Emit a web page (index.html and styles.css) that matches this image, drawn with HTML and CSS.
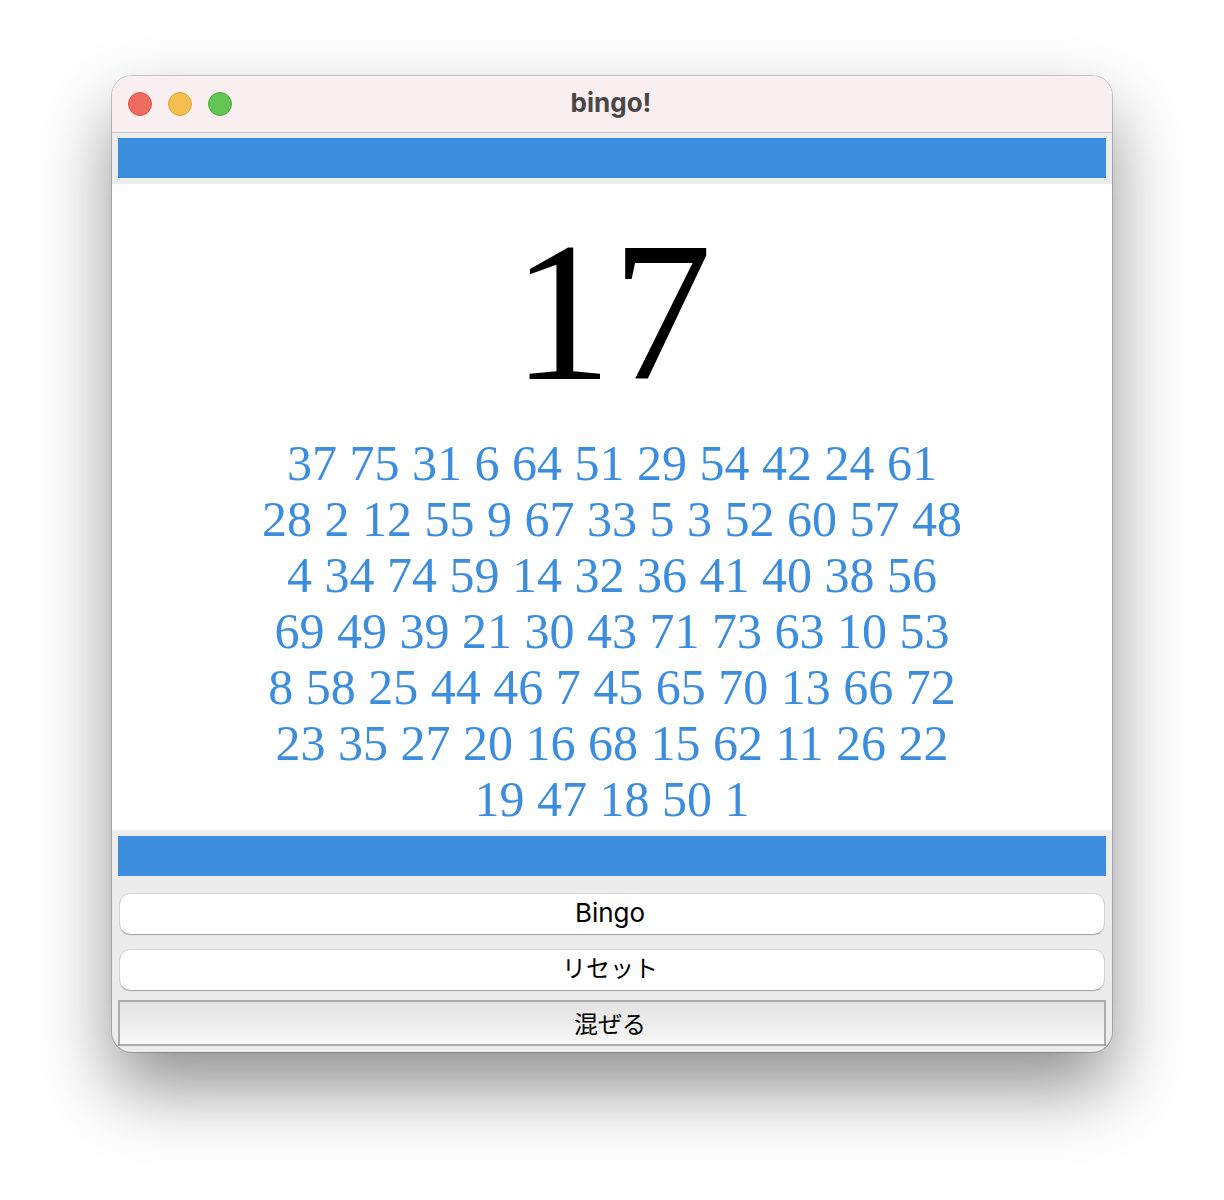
FILE: index.html
```html
<!DOCTYPE html>
<html lang="ja">
<head>
<meta charset="utf-8">
<meta name="viewport" content="width=device-width, initial-scale=1">
<title>bingo!</title>
<link rel="stylesheet" href="styles.css">
</head>
<body>
<main class="window">
  <header class="titlebar">
    <div class="lights">
      <button class="light close" type="button" aria-label="Close"></button>
      <button class="light minimize" type="button" aria-label="Minimize"></button>
      <button class="light zoom" type="button" aria-label="Zoom"></button>
    </div>
    <h1 class="title">bingo!</h1>
  </header>
  <div class="band"></div>
  <section class="board">
    <p class="current">17</p>
    <p class="history">37 75 31 6 64 51 29 54 42 24 61<br>28 2 12 55 9 67 33 5 3 52 60 57 48<br>4 34 74 59 14 32 36 41 40 38 56<br>69 49 39 21 30 43 71 73 63 10 53<br>8 58 25 44 46 7 45 65 70 13 66 72<br>23 35 27 20 16 68 15 62 11 26 22<br>19 47 18 50 1</p>
  </section>
  <div class="band"></div>
  <div class="actions">
    <button class="button rounded latin" type="button">Bingo</button>
    <button class="button rounded" type="button">リセット</button>
    <button class="button square" type="button">混ぜる</button>
  </div>
</main>
</body>
</html>
```
FILE: styles.css
```css
* {
  box-sizing: border-box;
}

body {
  margin: 0;
  padding: 76px 112px 148px;
  background: #fff;
  font-family: "Inter", "Noto Sans CJK JP", sans-serif;
}

.window {
  overflow: hidden;
  border-radius: 20px;
  background: #ececec;
  box-shadow: 0 0 0 1px rgba(0, 0, 0, 0.2), 0 36px 72px rgba(0, 0, 0, 0.44);
}

.titlebar {
  display: grid;
  grid-template-columns: 1fr auto 1fr;
  align-items: center;
  height: 57px;
  padding: 0 16px;
  border-bottom: 1px solid #c6c2c3;
  background: #f9eff0;
  box-shadow: inset 0 1px #fdf8f8;
}

.lights {
  display: flex;
  gap: 16px;
}

.light {
  width: 24px;
  height: 24px;
  padding: 0;
  border: 1px solid;
  border-radius: 50%;
}

.close {
  border-color: #d9544a;
  background: #ee6a5f;
}

.minimize {
  border-color: #d9a03d;
  background: #f5bf50;
}

.zoom {
  border-color: #4fa73e;
  background: #62c655;
}

.title {
  margin: 0;
  padding: 0 2px 2px 0;
  color: #4a4647;
  font-size: 26px;
  font-weight: 700;
  line-height: 32px;
}

.band {
  height: 51px;
  border: solid #ececec;
  border-width: 5px 6px 6px;
  background: #3c8dde;
}

.board {
  padding: 12px 0 3px;
  background: #fff;
  font-family: "Liberation Serif", "Times New Roman", serif;
  text-align: center;
}

.current,
.history {
  margin: 0;
}

.current {
  margin-bottom: 7px;
  color: #000;
  font-size: 200px;
  line-height: 232px;
}

.history {
  color: #3c8dde;
  font-size: 50px;
  line-height: 56px;
}

.board + .band {
  height: 52px;
  border-top-width: 6px;
}

.actions {
  display: flex;
  flex-direction: column;
  padding: 12px 6px 6px;
}

.button {
  color: #000;
  font-family: inherit;
  font-size: 24px;
  line-height: 36px;
}

.rounded {
  height: 40px;
  margin: 0 2px 16px;
  padding: 0 4px 2px 0;
  border: 0;
  border-radius: 10px;
  background: #fff;
  box-shadow: 0 0 0 1px rgba(0, 0, 0, 0.08), 0 1px 1px rgba(0, 0, 0, 0.28);
}

.latin {
  font-size: 26px;
}

.square {
  height: 46px;
  margin-top: -6px;
  padding: 4px 4px 0 0;
  border: 2px solid #acacac;
  background: linear-gradient(#e2e2e2, #f7f7f7);
}
```
